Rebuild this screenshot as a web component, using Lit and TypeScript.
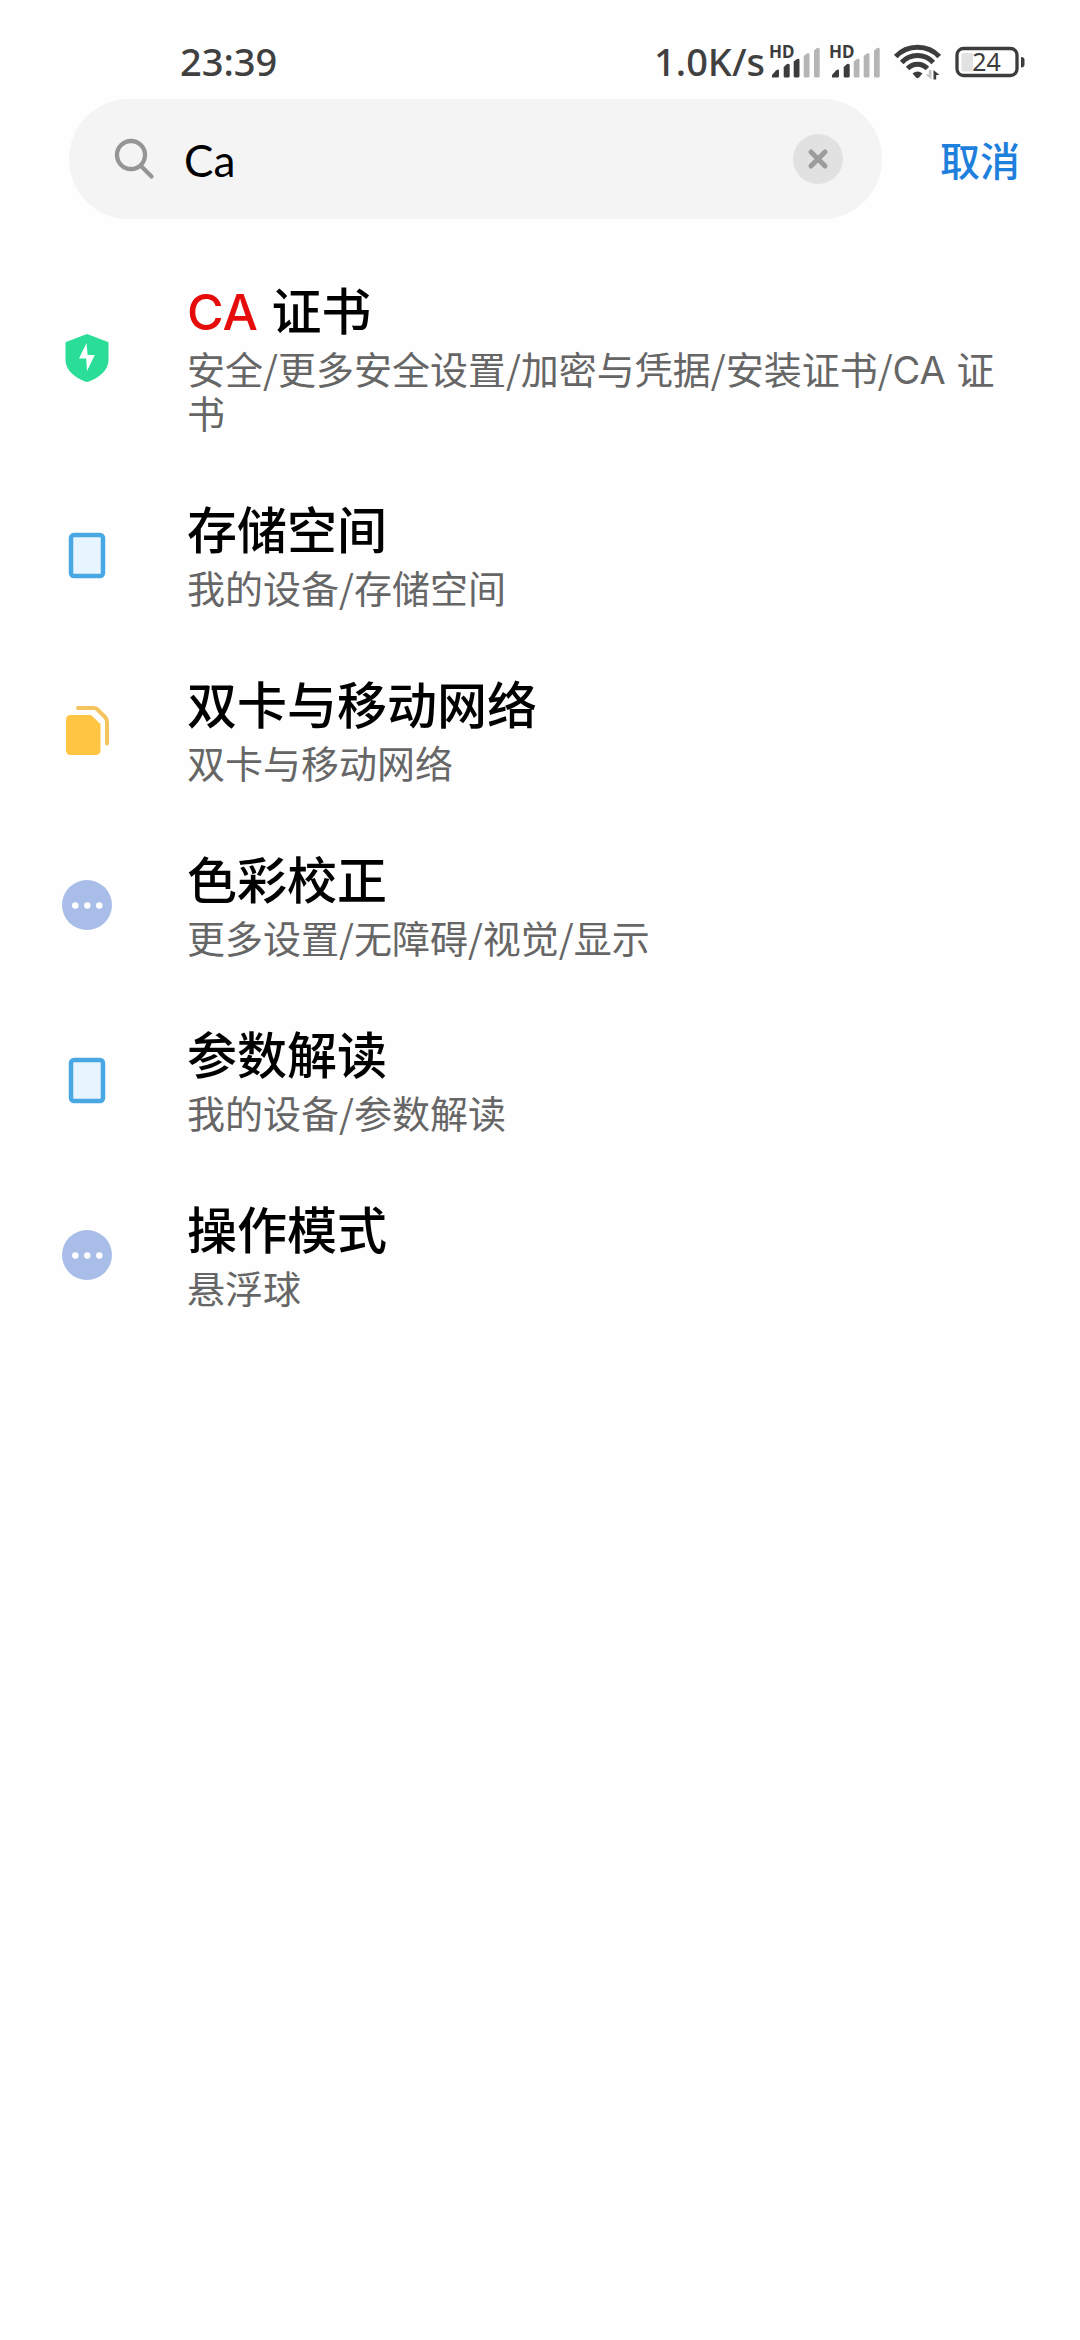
import { LitElement, html, svg, css, nothing } from "lit";
import { customElement, property, state } from "lit/decorators.js";

type IconName = "shield" | "tablet" | "cards" | "more";

interface Result {
  icon: IconName;
  match?: string;
  title: string;
  path: string;
}

const RESULTS: Result[] = [
  { icon: "shield", match: "CA", title: "证书", path: "安全/更多安全设置/加密与凭据/安装证书/CA 证书" },
  { icon: "tablet", title: "存储空间", path: "我的设备/存储空间" },
  { icon: "cards", title: "双卡与移动网络", path: "双卡与移动网络" },
  { icon: "more", title: "色彩校正", path: "更多设置/无障碍/视觉/显示" },
  { icon: "tablet", title: "参数解读", path: "我的设备/参数解读" },
  { icon: "more", title: "操作模式", path: "悬浮球" },
];

const GLYPHS = {
  shield: svg`
    <path d="M25 1 L46 9 Q46.500 9.200 46.500 10 V27 C46.500 38 36 45 27 48.500 Q25 49.300 23 48.500 C14 45 3.500 38 3.500 27 V10 Q3.500 9.200 4 9 Z" fill="#2ade97"/>
    <path d="M24.500 10 L17 25.500 H24.200 L25 38 L32.800 22 H25.600 Z" fill="#fff"/>`,
  tablet: svg`
    <rect x="9" y="5" width="32" height="41" rx="3" fill="#e6f5ff" stroke="#49a8e4" stroke-width="4.500"/>`,
  cards: svg`
    <path d="M9 10 H29 L38.500 19 V45 Q38.500 50 33.500 50 H9 Q4 50 4 45 V15 Q4 10 9 10 Z" fill="#ffc543"/>
    <path d="M16 3 H32 Q34 3 35.500 4.500 L43 12 Q45 14 45 16.500 V38.500" fill="none" stroke="#f4c55f" stroke-width="4" stroke-linecap="round" stroke-linejoin="round"/>`,
  more: svg`
    <circle cx="25" cy="25" r="25" fill="#a8bde8"/>
    <circle cx="13.300" cy="25.500" r="3.200" fill="#fff"/>
    <circle cx="25.300" cy="25.500" r="3.200" fill="#fff"/>
    <circle cx="37.300" cy="25.500" r="3.200" fill="#fff"/>`,
};

@customElement("signal-bars")
class SignalBars extends LitElement {
  @property({ type: Number }) level = 0;

  static styles = css`
    :host { display: block; }
    .glyph { display: block; width: 52px; height: 48px; }
    .hd { font: 700 17px "Noto Sans", sans-serif; fill: #3c3c3c; }
  `;

  render() {
    const bars = [
      "M3 32.500 V30 L7 25.500 Q10 23.500 10 26 V31 Q10 32.500 8.500 32.500 Z",
      "M14.700 31 V22 L18 19 Q20.700 18 20.700 20.500 V31 Q20.700 32.500 19.200 32.500 H16 Q14.700 32.500 14.700 31 Z",
      "M24.700 31 V16.500 L28 14 Q30.500 13 30.500 15 V31 Q30.500 32.500 29 32.500 H26.200 Q24.700 32.500 24.700 31 Z",
      "M34.700 31 V11 L38 8.500 Q40.500 7.500 40.500 9.500 V31 Q40.500 32.500 39 32.500 H36.200 Q34.700 32.500 34.700 31 Z",
      "M45 31 V5.500 L48 3 Q50.700 2 50.700 4 V31 Q50.700 32.500 49.200 32.500 H46.500 Q45 32.500 45 31 Z",
    ];
    return html`<svg class="glyph" viewBox="0 -7 52 48" aria-hidden="true">
      ${bars.map((d, i) => svg`<path d=${d} fill=${i < this.level ? "#3c3c3c" : "#b5b5b5"}/>`)}
      <text class="hd" x="0" y="13">HD</text>
    </svg>`;
  }
}

@customElement("status-bar")
class StatusBar extends LitElement {
  static styles = css`
    :host {
      display: flex;
      align-items: center;
      justify-content: space-between;
      box-sizing: border-box;
      height: 99px;
      padding: 25px 55px 0 180px;
      color: #404040;
      font: 500 38px/54px "Noto Sans", "Noto Sans CJK SC", sans-serif;
    }
    .tray { display: flex; align-items: center; }
    .label { padding-bottom: 2px; }
    .signals { display: flex; gap: 8px; margin: 0 13px 0 4px; }
    .wifi { display: block; width: 47px; height: 36px; margin-right: 14px; }
    .battery { display: block; width: 70px; height: 44px; }
    .charge { font: 400 25px "Noto Sans", sans-serif; fill: #3c3c3c; }
  `;

  render() {
    return html`
      <span class="label">23:39</span>
      <div class="tray">
        <span class="label">1.0K/s</span>
        <div class="signals">
          <signal-bars .level=${3}></signal-bars>
          <signal-bars .level=${2}></signal-bars>
        </div>
        <svg class="wifi" viewBox="0 0 47 36" aria-hidden="true">
          <g fill="none" stroke="#3c3c3c" stroke-width="5">
            <path d="M1.800 12.500 C13 0 34 0 45.200 12.500"/>
            <path d="M7.700 18.500 C16 9.300 31 9.300 39.300 18.500"/>
            <path d="M13.600 24.500 C19 18.700 28 18.700 33.400 24.500"/>
          </g>
          <path d="M18.500 29.500 Q23.500 25.500 28.500 29.500 L25 33.500 Q23.500 35 22 33.500 Z" fill="#3c3c3c"/>
          <path d="M37.500 26 V35.500 L31.500 30.500 H34.800 V26 Z" fill="#c4c4c4"/>
          <path d="M39.500 35.500 V26 L45.500 31 H42.200 V35.500 Z" fill="#3c3c3c"/>
        </svg>
        <svg class="battery" viewBox="0 -6 70 44" aria-hidden="true">
          <rect x="2" y="2.500" width="60" height="27" rx="6.500" fill="none" stroke="#3c3c3c" stroke-width="3.300"/>
          <path d="M8.500 7 H18 V25.500 H8.500 Q6.500 25.500 6.500 23.500 V9 Q6.500 7 8.500 7 Z" fill="#e2e2e2"/>
          <path d="M66 11 Q69.500 11 69.500 14 V18.500 Q69.500 21.500 66 21.500 Z" fill="#3c3c3c"/>
          <text class="charge" x="31.500" y="25" text-anchor="middle">24</text>
        </svg>
      </div>
    `;
  }
}

@customElement("result-row")
class ResultRow extends LitElement {
  @property({ attribute: false }) item!: Result;

  static styles = css`
    :host { display: block; }
    .row {
      display: grid;
      grid-template-columns: 50px 1fr;
      align-items: center;
      column-gap: 75px;
      padding: 29px 66px 21px 62px;
      color: inherit;
      text-decoration: none;
    }
    .icon { display: block; width: 50px; height: 50px; }
    .text { display: grid; gap: 3px; padding-bottom: 8px; }
    .title { font-size: 50px; line-height: 70px; font-weight: 500; color: #000; }
    .path { font-size: 38px; line-height: 44px; color: #666; }
    .latin { font-family: Inter, sans-serif; line-height: 1; white-space: pre-wrap; }
    .match { color: #e60c0c; }
  `;

  render() {
    const { icon, match, title, path } = this.item;
    const runs = path.split(/([A-Z]+ )/);
    return html`
      <a class="row" href="#">
        <svg class="icon" viewBox="0 0 50 50" aria-hidden="true">${GLYPHS[icon]}</svg>
        <span class="text">
          <span class="title">${match ? html`<span class="latin match">${match} </span>` : nothing}${title}</span>
          <span class="path">${runs.map((run, i) => (i % 2 ? html`<span class="latin">${run}</span>` : run))}</span>
        </span>
      </a>
    `;
  }
}

@customElement("app-root")
class AppRoot extends LitElement {
  @state() private query = "Ca";

  static styles = css`
    :host {
      display: block;
      min-height: 100vh;
      background: #fefefe;
      font-family: "Noto Sans CJK SC", sans-serif;
    }
    .header { display: flex; align-items: center; padding: 0 60px 0 69px; gap: 58px; }
    .search {
      flex: 1;
      min-width: 0;
      display: flex;
      align-items: center;
      box-sizing: border-box;
      height: 120px;
      padding: 0 39px 0 45px;
      border-radius: 60px;
      background: #f4f4f4;
    }
    .lens { flex: none; width: 42px; height: 42px; margin-right: 28px; }
    .field {
      flex: 1;
      min-width: 0;
      padding: 1px 0 0;
      border: 0;
      outline: 0;
      background: none;
      color: #000;
      font: 400 44px/60px Lato, "Noto Sans CJK SC", sans-serif;
    }
    .clear, .cancel { padding: 0; border: 0; background: none; cursor: pointer; }
    .clear { flex: none; width: 50px; height: 50px; }
    .cross { display: block; width: 50px; height: 50px; }
    .cancel { color: #1f7fdc; font: 500 40px/60px "Noto Sans CJK SC", sans-serif; }
    .results { margin: 0; padding: 25px 0; list-style: none; }
  `;

  render() {
    return html`
      <status-bar></status-bar>
      <header class="header">
        <div class="search">
          <svg class="lens" viewBox="0 0 42 42" aria-hidden="true">
            <g fill="none" stroke="#959595" stroke-width="4.300" stroke-linecap="round">
              <circle cx="17" cy="17" r="14"/>
              <path d="M27.500 28.500 L37.500 38.500"/>
            </g>
          </svg>
          <input class="field" type="text" aria-label="搜索" .value=${this.query}
            @input=${(e: Event) => (this.query = (e.target as HTMLInputElement).value)} />
          <button class="clear" type="button" aria-label="清除" @click=${() => (this.query = "")}>
            <svg class="cross" viewBox="0 0 50 50" aria-hidden="true">
              <circle cx="25" cy="25" r="25" fill="#e1e1e1"/>
              <path d="M18 18 L32 32 M32 18 L18 32" stroke="#9c9c9c" stroke-width="5" stroke-linecap="round"/>
            </svg>
          </button>
        </div>
        <button class="cancel" type="button">取消</button>
      </header>
      <ul class="results">
        ${RESULTS.map((item) => html`<li><result-row .item=${item}></result-row></li>`)}
      </ul>
    `;
  }
}
